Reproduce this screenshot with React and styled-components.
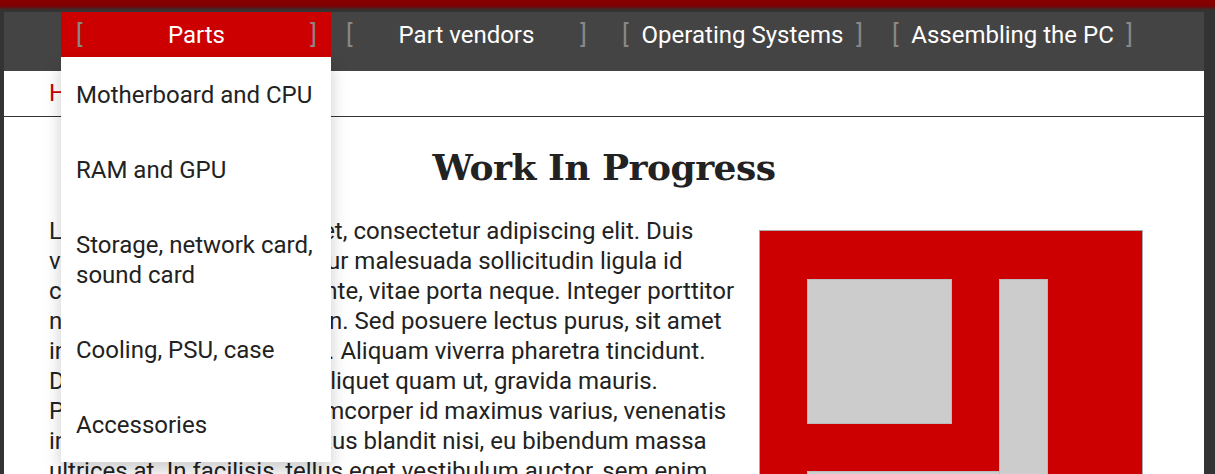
import styled, { createGlobalStyle } from 'styled-components'

const GlobalStyle = createGlobalStyle`
  body{
    margin: 0;
    background: #333;
    font-family: Roboto, "Liberation Sans", sans-serif;
    overflow: hidden;
  }
`

const TopGlow = styled.div`
  height: 10px;
  background: linear-gradient(#8a0000, #7d0000 60%, #333);
`

const Page = styled.div`
  width: 1200px;
  margin: 2px 0 0 4px;
  background: #fff;
  min-height: 500px;
`

const Nav = styled.nav`
  display: flex;
  justify-content: center;
  align-items: flex-start;
  height: 59px;
  background: #444;
`

const NavItem = styled.div`
  position: relative;
  display: flex;
  align-items: center;
  box-sizing: border-box;
  width: 270px;
  height: 45px;
  padding: 0 14px 0 15px;
  margin-left: ${({$gap}) => $gap || 0}px;
  background: ${({$active}) => ($active ? '#cc0000' : 'transparent')};
  color: #fff;
  font-size: 24px;

  .bracket{
    color: #888;
    font-size: 25px;
  }
  .label{
    flex: 1;
    text-align: center;
  }
`

const Dropdown = styled.ul`
  position: absolute;
  top: 45px;
  left: 0;
  z-index: 5;
  width: 270px;
  margin: 0;
  padding: 0;
  list-style: none;
  background: #fff;
  box-shadow: 0 8px 16px 0 rgba(0, 0, 0, 0.2);
`

const DropItem = styled.li`
  padding: 23px 15px 22px;
  line-height: 30px;
  font-size: 24px;
  color: #222;
`

const Breadcrumb = styled.div`
  height: 45px;
  line-height: 45px;
  padding-left: 45px;
  border-bottom: 1px solid #333;
  font-size: 24px;

  a{
    color: #cc0000;
    text-decoration: none;
  }
`

const Main = styled.main`
  padding: 0 45px;
  color: #222;
`

const Title = styled.h1`
  margin: 29px 0 27px;
  text-align: center;
  font-family: "DejaVu Serif", "Liberation Serif", serif;
  font-size: 36px;
  line-height: 43px;
  letter-spacing: -0.5px;
`

const Row = styled.div`
  display: flex;
  gap: 20px;
  align-items: flex-start;
`

const Text = styled.p`
  flex: 1;
  margin: 0;
  font-size: 24px;
  line-height: 30px;
  white-space: nowrap;
`

const Figure = styled.figure`
  flex: 0 0 384px;
  margin: 14px 16px 0 0;
  line-height: 0;
`

const links = ['Parts', 'Part vendors', 'Operating Systems', 'Assembling the PC']
const parts = ['Motherboard and CPU', 'RAM and GPU', 'Storage, network card, sound card', 'Cooling, PSU, case', 'Accessories']

const lines = [
  'Lorem ipsum dolor sit amet, consectetur adipiscing elit. Duis',
  'vestibulum ipsum. Curabitur malesuada sollicitudin ligula id',
  'cursus magna, convallis ante, vitae porta neque. Integer porttitor',
  'nibh, quam tincidunt sapien. Sed posuere lectus purus, sit amet',
  'interdum ante, feugiat orci. Aliquam viverra pharetra tincidunt.',
  'Donec ac tortor at nisl ut aliquet quam ut, gravida mauris.',
  'Pellentesque nec nisi, ullamcorper id maximus varius, venenatis',
  'in dictum neque. Nulla lectus blandit nisi, eu bibendum massa',
  'ultrices at. In facilisis, tellus eget vestibulum auctor, sem enim',
  'tempor nulla, at finibus mi arcu non purus.',
]

function Logo() {
  return (
    <svg width="384" height="384" viewBox="0 0 384 384">
      <rect x="0.5" y="0.5" width="383" height="383" fill="#cc0000" stroke="#aaa" />
      <rect x="48.5" y="49.5" width="144" height="144" fill="#ccc" stroke="#bbb" />
      <rect x="240.5" y="49.5" width="48" height="288" fill="#ccc" stroke="#bbb" />
      <rect x="48.5" y="241.5" width="192" height="48" fill="#ccc" stroke="#bbb" />
    </svg>
  )
}

export default function App() {
  return (
    <>
      <GlobalStyle />
      <TopGlow />
      <Page>
        <Nav>
          {links.map((l, i) => (
            <NavItem key={l} $active={i === 0} $gap={i === 2 ? 6 : 0}>
              <span className='bracket'>[</span>
              <span className='label'>{l}</span>
              <span className='bracket'>]</span>
              {i === 0 && (
                <Dropdown>
                  {parts.map(p => <DropItem key={p}>{p}</DropItem>)}
                </Dropdown>
              )}
            </NavItem>
          ))}
        </Nav>
        <Breadcrumb><a href="#">Home</a></Breadcrumb>
        <Main>
          <Title>Work In Progress</Title>
          <Row>
            <Text>
              {lines.map((t, i) => (
                <span key={i}>{t}{i < lines.length - 1 && <br />}</span>
              ))}
            </Text>
            <Figure><Logo /></Figure>
          </Row>
        </Main>
      </Page>
    </>
  )
}
